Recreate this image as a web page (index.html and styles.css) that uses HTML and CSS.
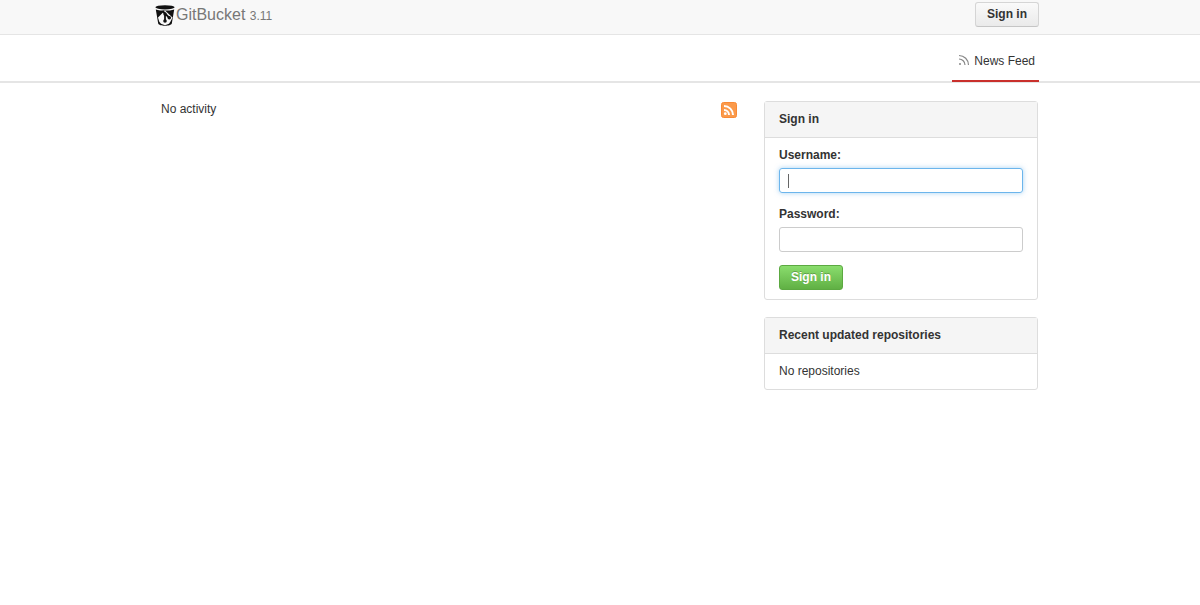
FILE: index.html
```html
<!doctype html>
<html lang="en">
  <head>
    <meta charset="UTF-8" />
    <meta name="viewport" content="width=device-width, initial-scale=1.0" />
    <title>GitBucket</title>
    <link rel="stylesheet" href="styles.css">
  </head>
  <body>
    <header class="navbar">
      <div class="container navbar-inner">
        <a href="#" class="brand">
          <svg class="brand-logo" width="20" height="22" viewBox="0 0 20 22" aria-hidden="true">
            <ellipse cx="10" cy="2.300" rx="9.600" ry="2.100" fill="#111" />
            <path fill="#111" d="M.8 4.400c5 1.600 13.400 1.600 18.400 0l-2.400 14c-.8 3-12.800 3-13.600 0z" />
            <path fill="#f8f8f8" d="M10 5.500l7.500 7-2 4-1.500 2.300-4 1.500-4-1.500-1.700-2-1.300-4.300z" />
            <path fill="none" stroke="#111" stroke-width="1.800" d="M7.500 6l7 7M10 8.500v8" />
            <circle cx="10" cy="9" r="1.700" fill="#111" />
            <circle cx="14.300" cy="12.800" r="1.800" fill="#111" />
            <circle cx="10" cy="16" r="1.800" fill="#111" />
          </svg>
          <span>GitBucket <small>3.11</small></span>
        </a>
        <button type="button" class="btn">Sign in</button>
      </div>
    </header>

    <nav class="head-nav">
      <div class="container head-nav-inner">
        <a href="#" class="head-tab active">
          <svg class="tab-icon" width="12" height="12" viewBox="0 0 12 12" fill="none" stroke="#888" aria-hidden="true">
            <path stroke-width="1.200" d="M1 1.500A9.500 9.500 0 0 1 10.500 11M1 5A6 6 0 0 1 7 11" />
            <circle cx="2" cy="10" r="1" fill="#888" stroke="none" />
          </svg>
          News Feed
        </a>
      </div>
    </nav>

    <main class="container content">
      <section class="activity">
        <p>No activity</p>
        <a href="#" class="feed-link" aria-label="Feed">
          <svg width="16" height="16" viewBox="0 0 16 16" aria-hidden="true">
            <rect x=".5" y=".5" width="15" height="15" rx="2" fill="#fb9a4b" stroke="#f98a35" />
            <path fill="none" stroke="#fff" stroke-width="2" d="M3 4A9 9 0 0 1 12 13M3 8A5 5 0 0 1 8 13" />
            <circle cx="4.300" cy="11.700" r="1.400" fill="#fff" />
          </svg>
        </a>
      </section>

      <aside class="sidebar">
        <form class="panel">
          <h2 class="panel-title">Sign in</h2>
          <div class="panel-body">
            <div class="field">
              <label for="userName">Username:</label>
              <input type="text" id="userName" name="userName" placeholder=" " autocomplete="off" autofocus />
            </div>
            <div class="field">
              <label for="password">Password:</label>
              <input type="password" id="password" name="password" placeholder=" " />
            </div>
            <button type="submit" class="btn btn-success">Sign in</button>
          </div>
        </form>

        <section class="panel">
          <h2 class="panel-title">Recent updated repositories</h2>
          <div class="panel-body">No repositories</div>
        </section>
      </aside>
    </main>
  </body>
</html>
```
FILE: styles.css
```css
* {
  margin: 0;
  padding: 0;
  box-sizing: border-box;
}

body {
  font-family: "Liberation Sans", Arial, sans-serif;
  font-size: 12px;
  line-height: 17px;
  color: #333;
  background: white;
}

a {
  color: #333;
  text-decoration: none;
}

.container {
  max-width: 878px;
  margin: 0 auto;
}

/* Top bar */
.navbar {
  background: #f8f8f8;
  border-bottom: 1px solid #e5e5e5;
}

.navbar-inner {
  display: flex;
  justify-content: space-between;
  padding: 2px 0 7px;
}

.brand {
  display: flex;
  align-items: center;
  height: 27px;
  margin-left: -6px;
  margin-bottom: -2px;
  font-size: 16px;
  color: #777;
}

.brand-logo {
  margin-right: 1px;
}

.brand small {
  font-size: 12px;
}

.btn {
  height: 25px;
  padding: 0 11px;
  font: bold 12px/17px "Liberation Sans", Arial, sans-serif;
  color: #333;
  background: linear-gradient(#fafafa, #eaeaea);
  border: 1px solid #d5d5d5;
  border-bottom-color: #c5c5c5;
  border-radius: 3px;
  cursor: pointer;
}

.btn-success {
  color: white;
  background: linear-gradient(#8add6d, #60b044);
  border-color: #5ca941;
  text-shadow: 0 -1px 0 rgba(0, 0, 0, 0.25);
}

/* Tabs */
.head-nav {
  border-bottom: 2px solid #e5e5e5;
}

.head-nav-inner {
  display: flex;
  justify-content: flex-end;
}

.head-tab {
  display: flex;
  align-items: center;
  gap: 4px;
  height: 47px;
  margin-bottom: -1px;
  padding: 8px 4px 0 6px;
}

.head-tab.active {
  border-bottom: 2px solid #c9302c;
}

.tab-icon {
  margin-bottom: 4px;
}

/* Content */
.content {
  display: flex;
  gap: 27px;
  padding: 18px 1px 0 0;
}

.activity {
  flex: 1;
  display: flex;
  justify-content: space-between;
  align-items: flex-start;
}

.feed-link {
  padding-top: 1px;
}

.feed-link svg {
  display: block;
}

.sidebar {
  width: 274px;
}

.panel {
  margin-bottom: 17px;
  border: 1px solid #ddd;
  border-radius: 3px;
}

.panel-title {
  padding: 9px 14px;
  font-size: 12px;
  background: #f5f5f5;
  border-bottom: 1px solid #ddd;
}

.panel-body {
  padding: 9px 14px;
}

.field {
  margin-bottom: 13px;
}

.field label {
  display: block;
  margin-bottom: 4px;
  font-weight: bold;
}

.field input {
  display: block;
  width: 100%;
  height: 25px;
  padding: 0 8px;
  font: 12px/17px "Liberation Sans", Arial, sans-serif;
  color: #333;
  border: 1px solid #ccc;
  border-radius: 3px;
}

.field input:focus {
  outline: none;
  border-color: #6cb5ec;
  box-shadow: 0 0 5px rgba(81, 167, 232, 0.5);
}

/* steady cursor while the field is empty */
.field input:focus:placeholder-shown {
  caret-color: transparent;
  background: linear-gradient(#666, #666) 8px center / 1px 14px no-repeat;
}

@media (max-width: 768px) {
  .container {
    margin: 0 16px;
  }
  .content {
    flex-direction: column;
  }
  .activity {
    width: 100%;
  }
  .sidebar {
    width: 100%;
  }
}
```
